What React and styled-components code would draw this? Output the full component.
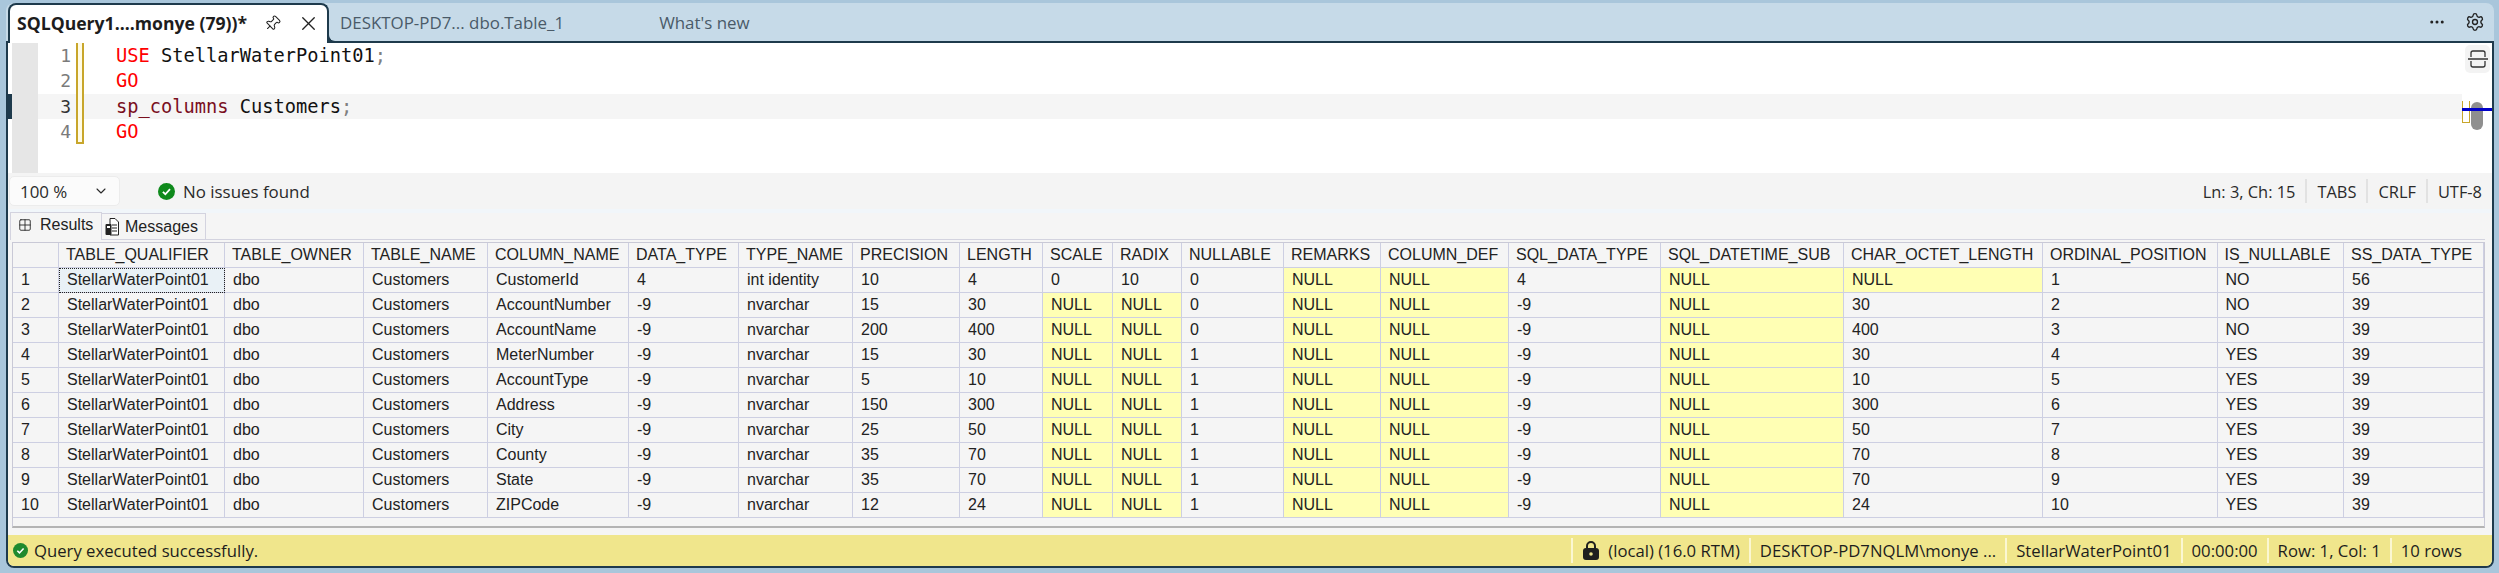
import React from 'react';
import styled, { createGlobalStyle } from 'styled-components';
import { Pin, X, Settings, Ellipsis, ChevronDown, Grid2x2 } from 'lucide-react';

const uiFont = '"Open Sans", "Noto Sans", sans-serif';
const gridFont = '"Liberation Sans", Arial, sans-serif';
const dark = '#1e3a4c';

const Global = createGlobalStyle`
  html, body {
    margin: 0;
    background: #a9c6db;
    overflow: hidden;
  }
  * { box-sizing: border-box; }
`;

const Page = styled.div`
  padding: 3px 5px 0 6px;
  height: 573px;
  font-family: ${uiFont};
`;

const TabStrip = styled.div`
  height: 40px;
  margin-bottom: -2px;
  background: #c6dae8;
  border-radius: 8px 8px 0 0;
  display: flex;
  align-items: stretch;
  padding-left: 2px;
`;

const ActiveTab = styled.div`
  position: relative;
  z-index: 2;
  width: 321px;
  height: 40px;
  background: #fff;
  border: 2px solid ${dark};
  border-bottom: none;
  border-radius: 8px 8px 0 0;
  display: flex;
  align-items: center;
  padding: 0 0 2px 7px;
  font-size: 17.6px;
  font-weight: 700;
  color: #1d1d1d;
  white-space: nowrap;
  &::after {
    content: '';
    position: absolute;
    right: -10px;
    bottom: 0;
    width: 8px;
    height: 8px;
    border-left: 2px solid ${dark};
    border-bottom: 2px solid ${dark};
    border-bottom-left-radius: 8px;
    background: #c6dae8;
  }
`;

const TabTitle = styled.span`
  width: 239px;
`;

const TabIcon = styled.span`
  display: flex;
  width: ${(p) => p.$w}px;
  justify-content: center;
  color: #222;
`;

const Tab = styled.div`
  display: flex;
  align-items: center;
  padding-bottom: 2px;
  margin-left: ${(p) => p.$gap}px;
  font-size: 16.9px;
  color: #4a5a68;
  white-space: nowrap;
`;

const StripTools = styled.div`
  margin-left: auto;
  display: flex;
  align-items: center;
  gap: 19px;
  padding: 0 9px 2px 0;
  color: #222;
`;

const Panel = styled.div`
  position: relative;
  height: 527px;
  border: 2px solid ${dark};
  border-radius: 0 0 8px 8px;
  overflow: hidden;
  display: flex;
  flex-direction: column;
  background: #f4f4f4;
`;

const Editor = styled.div`
  position: relative;
  height: 130px;
  background: #fff;
  display: flex;
  flex-direction: column;
  font-family: "DejaVu Sans Mono", monospace;
  font-size: 18.7px;
`;

const Line = styled.div`
  height: ${(p) => (p.$fill ? '28.8px' : '25.3px')};
  display: flex;
  align-items: center;
  margin-right: 30px;
  background: ${(p) => (p.$current ? '#f5f5f5' : 'transparent')};
`;

const Marker = styled.div`
  width: 4px;
  align-self: stretch;
  background: ${(p) => (p.$on ? dark : '#fff')};
`;

const Glyphs = styled.div`
  width: 26px;
  align-self: stretch;
  background: #e6e6e6;
`;

const LineNo = styled.div`
  width: 33px;
  text-align: right;
  color: ${(p) => (p.$current ? '#333' : '#7b7b7b')};
  font-size: 18px;
`;

const ChangeBar = styled.div`
  width: 8px;
  margin-left: 5px;
  align-self: stretch;
  background: #fffbe6;
  border-left: 2px solid #c8a62b;
  border-right: 2px solid #c8a62b;
  border-bottom: ${(p) => (p.$last ? '2px solid #c8a62b' : 'none')};
`;

const Code = styled.div`
  margin-left: 32px;
  white-space: pre;
  color: #111;
`;

const Keyword = styled.span`
  color: #f00;
`;

const Proc = styled.span`
  color: #7a0f1e;
`;

const Semi = styled.span`
  color: #808080;
`;

const SplitButton = styled.div`
  position: absolute;
  top: 2px;
  right: 2px;
  width: 25px;
  height: 28px;
  border-radius: 5px;
  background: #f3f3f3;
  display: flex;
  align-items: center;
  justify-content: center;
`;

const OverviewMark = styled.div`
  position: absolute;
  top: 58px;
  right: 22px;
  width: 8px;
  height: 22px;
  border: 1px solid #c8a62b;
  border-top: none;
`;

const OverviewThumb = styled.div`
  position: absolute;
  top: 59px;
  right: 9px;
  width: 12px;
  height: 28px;
  border-radius: 6px;
  background: #8f8f8f;
`;

const OverviewCursor = styled.div`
  position: absolute;
  top: 65px;
  right: 0;
  width: 30px;
  height: 3px;
  background: #0000c8;
`;

const Toolbar = styled.div`
  height: 36px;
  display: flex;
  align-items: center;
  padding: 0 0 0 1px;
  font-size: 16.9px;
  color: #2a2a2a;
`;

const ZoomBox = styled.div`
  width: 111px;
  height: 30px;
  background: #fbfbfb;
  border: 1px solid #ececec;
  border-radius: 5px;
  display: flex;
  align-items: center;
  justify-content: space-between;
  padding: 0 10px 0 10px;
`;

const Issues = styled.div`
  margin-left: 38px;
  display: flex;
  align-items: center;
  gap: 8px;
`;

const Position = styled.div`
  margin-left: auto;
  display: flex;
  align-items: center;
  font-size: 16.4px;
`;

const PositionItem = styled.div`
  height: 24px;
  display: flex;
  align-items: center;
  padding: 0 10px;
  border-left: ${(p) => (p.$first ? 'none' : '2px solid #e2e2e2')};
`;

const Splitter = styled.div`
  height: 4px;
  background: #f1f6fa;
`;

const Results = styled.div`
  height: 322px;
  background: #f5f5f5;
  padding-right: 7px;
`;

const ResultTabs = styled.div`
  height: 27px;
  display: flex;
  align-items: flex-end;
  border-bottom: 1px solid #d3d3df;
  margin-left: 2px;
`;

const ResultTab = styled.div`
  width: ${(p) => p.$w}px;
  height: ${(p) => (p.$active ? 28 : 26)}px;
  margin-bottom: ${(p) => (p.$active ? -1 : 0)}px;
  background: #f5f5f5;
  border: 1px solid #d3d3df;
  border-left: ${(p) => (p.$active ? '1px solid #d3d3df' : 'none')};
  border-bottom: none;
  display: flex;
  align-items: center;
  gap: ${(p) => (p.$active ? 8 : 6)}px;
  padding: ${(p) => (p.$active ? '0 0 3px 7px' : '0 0 0 3px')};
  font-family: ${gridFont};
  font-size: 16px;
  color: #222;
`;

const DataGrid = styled.div`
  margin: 2px 0 0 4px;
  height: 286px;
  border: 1px solid #c9c9d6;
  border-bottom: 2px solid #b4b4b4;
  display: grid;
  grid-template-columns: ${(p) => p.$columns};
  grid-auto-rows: 25px;
  align-content: start;
  font-family: ${gridFont};
  font-size: 16px;
  color: #222;
`;

const Cell = styled.div`
  display: flex;
  align-items: center;
  padding-left: ${(p) => (p.$head ? 7 : 8)}px;
  white-space: nowrap;
  overflow: hidden;
  border-right: 1px solid #cdcfe2;
  border-bottom: 1px solid #cdcfe2;
  background: ${(p) => (p.$null ? '#ffffb4' : p.$focus ? '#e9f1f6' : 'transparent')};
  outline: ${(p) => (p.$focus ? '1px dotted #222' : 'none')};
  outline-offset: -1px;
`;

const StatusBar = styled.div`
  height: 31px;
  background: #f0e68c;
  display: flex;
  align-items: center;
  padding: 0 21px 0 5px;
  font-size: 16.7px;
  color: #1d1d1d;
`;

const StatusMessage = styled.div`
  display: flex;
  align-items: center;
  gap: 6px;
`;

const StatusCells = styled.div`
  margin-left: auto;
  display: flex;
  align-items: center;
`;

const StatusCell = styled.div`
  height: 25px;
  display: flex;
  align-items: center;
  gap: 8px;
  padding: 0 9px;
  border-left: 2px solid #fbf7d2;
  white-space: nowrap;
`;

const columns = [46, 166, 139, 124, 141, 110, 114, 107, 83, 70, 69, 102, 97, 128, 152, 183, 199, 174.5, 126.5, 140];

const headers = [
  '', 'TABLE_QUALIFIER', 'TABLE_OWNER', 'TABLE_NAME', 'COLUMN_NAME', 'DATA_TYPE', 'TYPE_NAME', 'PRECISION',
  'LENGTH', 'SCALE', 'RADIX', 'NULLABLE', 'REMARKS', 'COLUMN_DEF', 'SQL_DATA_TYPE', 'SQL_DATETIME_SUB',
  'CHAR_OCTET_LENGTH', 'ORDINAL_POSITION', 'IS_NULLABLE', 'SS_DATA_TYPE',
];

const varchar = [
  ['AccountNumber', 15, 30, 0, 'NO', 30],
  ['AccountName', 200, 400, 0, 'NO', 400],
  ['MeterNumber', 15, 30, 1, 'YES', 30],
  ['AccountType', 5, 10, 1, 'YES', 10],
  ['Address', 150, 300, 1, 'YES', 300],
  ['City', 25, 50, 1, 'YES', 50],
  ['County', 35, 70, 1, 'YES', 70],
  ['State', 35, 70, 1, 'YES', 70],
  ['ZIPCode', 12, 24, 1, 'YES', 24],
];

const rows = [
  ['1', 'StellarWaterPoint01', 'dbo', 'Customers', 'CustomerId', '4', 'int identity', '10', '4', '0', '10', '0', 'NULL', 'NULL', '4', 'NULL', 'NULL', '1', 'NO', '56'],
  ...varchar.map(([name, prec, len, nullable, isNull, octet], i) => [
    String(i + 2), 'StellarWaterPoint01', 'dbo', 'Customers', name, '-9', 'nvarchar', String(prec), String(len),
    'NULL', 'NULL', String(nullable), 'NULL', 'NULL', '-9', 'NULL', String(octet), String(i + 2), isNull, '39',
  ]),
];

const positionItems = ['Ln: 3, Ch: 15', 'TABS', 'CRLF', 'UTF-8'];
const statusItems = ['DESKTOP-PD7NQLM\\monye ...', 'StellarWaterPoint01', '00:00:00', 'Row: 1, Col: 1', '10 rows'];

function CheckBadge({ size, fill }) {
  return (
    <svg width={size} height={size} viewBox="0 0 16 16">
      <circle cx="8" cy="8" r="8" fill={fill} />
      <path d="M4.6 8.3l2.3 2.3 4.4-4.8" fill="none" stroke="#fff" strokeWidth="1.7" />
    </svg>
  );
}

function SplitIcon() {
  return (
    <svg width="22" height="22" viewBox="0 0 22 22" fill="none" stroke="#333" strokeWidth="1.3">
      <path d="M4 9V5a2 2 0 0 1 2-2h10a2 2 0 0 1 2 2v4" />
      <path d="M1 11h20" />
      <path d="M4 13v4a2 2 0 0 0 2 2h10a2 2 0 0 0 2-2v-4" />
    </svg>
  );
}

function MessagesIcon() {
  return (
    <svg width="14" height="18" viewBox="0 0 14 18">
      <path d="M5 .5h5l3.5 3.5v13H5z" fill="#fff" stroke="#222" />
      <path d="M7 7h5M7 10h5M7 13h5" stroke="#222" />
      <rect x="0.5" y="6" width="6" height="11" rx="1" fill="#222" />
      <rect x="2" y="8" width="3" height="2" fill="#fff" />
    </svg>
  );
}

function LockIcon() {
  return (
    <svg width="18" height="21" viewBox="0 0 18 21">
      <path d="M5 9V6a4 4 0 0 1 8 0v3" fill="none" stroke="#1f1f1f" strokeWidth="2" />
      <rect x="1" y="8" width="16" height="12" rx="3" fill="#1f1f1f" />
      <circle cx="9" cy="14" r="1.8" fill="#f0e68c" />
    </svg>
  );
}

function App() {
  return (
    <Page>
      <Global />
      <TabStrip>
        <ActiveTab>
          <TabTitle>SQLQuery1....monye (79))*</TabTitle>
          <TabIcon $w={34}>
            <Pin size={17} strokeWidth={1.5} style={{ transform: 'rotate(45deg)' }} />
          </TabIcon>
          <TabIcon $w={38}>
            <X size={23} strokeWidth={1.4} />
          </TabIcon>
        </ActiveTab>
        <Tab $gap={11}>DESKTOP-PD7... dbo.Table_1</Tab>
        <Tab $gap={95}>What's new</Tab>
        <StripTools>
          <Ellipsis size={18} />
          <Settings size={20} strokeWidth={1.6} />
        </StripTools>
      </TabStrip>
      <Panel>
        <Editor>
          <Line>
            <Marker />
            <Glyphs />
            <LineNo>1</LineNo>
            <ChangeBar />
            <Code>
              <Keyword>USE</Keyword> StellarWaterPoint01<Semi>;</Semi>
            </Code>
          </Line>
          <Line>
            <Marker />
            <Glyphs />
            <LineNo>2</LineNo>
            <ChangeBar />
            <Code>
              <Keyword>GO</Keyword>
            </Code>
          </Line>
          <Line $current>
            <Marker $on />
            <Glyphs />
            <LineNo $current>3</LineNo>
            <ChangeBar />
            <Code>
              <Proc>sp_columns</Proc> Customers<Semi>;</Semi>
            </Code>
          </Line>
          <Line>
            <Marker />
            <Glyphs />
            <LineNo>4</LineNo>
            <ChangeBar $last />
            <Code>
              <Keyword>GO</Keyword>
            </Code>
          </Line>
          <Line $fill>
            <Marker />
            <Glyphs />
          </Line>
          <SplitButton>
            <SplitIcon />
          </SplitButton>
          <OverviewMark />
          <OverviewThumb />
          <OverviewCursor />
        </Editor>
        <Toolbar>
          <ZoomBox>
            100 %
            <ChevronDown size={16} strokeWidth={1.6} />
          </ZoomBox>
          <Issues>
            <CheckBadge size={17} fill="#0f8a1c" />
            No issues found
          </Issues>
          <Position>
            {positionItems.map((item, i) => (
              <PositionItem key={item} $first={i === 0}>
                {item}
              </PositionItem>
            ))}
          </Position>
        </Toolbar>
        <Splitter />
        <Results>
          <ResultTabs>
            <ResultTab $active $w={92}>
              <Grid2x2 size={14} strokeWidth={1.5} />
              Results
            </ResultTab>
            <ResultTab $w={104}>
              <MessagesIcon />
              Messages
            </ResultTab>
          </ResultTabs>
          <DataGrid $columns={columns.map((w) => `${w}px`).join(' ')}>
            {headers.map((h, i) => (
              <Cell key={i} $head>
                {h}
              </Cell>
            ))}
            {rows.map((row, r) =>
              row.map((value, c) => (
                <Cell key={`${r}-${c}`} $null={value === 'NULL'} $focus={r === 0 && c === 1}>
                  {value}
                </Cell>
              )),
            )}
          </DataGrid>
        </Results>
        <StatusBar>
          <StatusMessage>
            <CheckBadge size={15} fill="#1f8a2e" />
            Query executed successfully.
          </StatusMessage>
          <StatusCells>
            <StatusCell>
              <LockIcon />
              (local) (16.0 RTM)
            </StatusCell>
            {statusItems.map((item) => (
              <StatusCell key={item}>{item}</StatusCell>
            ))}
          </StatusCells>
        </StatusBar>
      </Panel>
    </Page>
  );
}

export default App;
